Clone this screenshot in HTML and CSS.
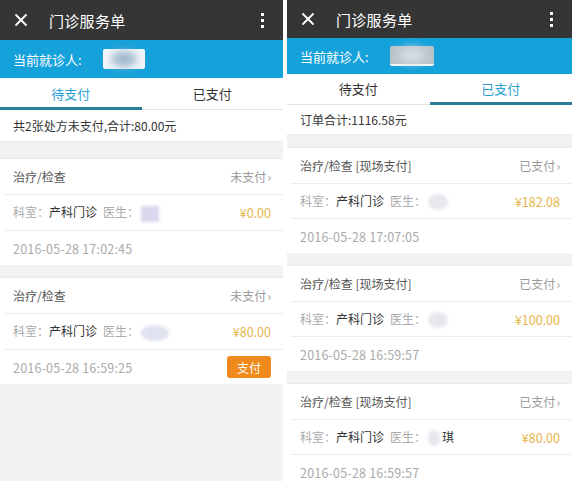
FILE: index.html
```html
<!DOCTYPE html>
<html lang="zh">
<head>
<meta charset="utf-8">
<link rel="stylesheet" href="styles.css">
</head>
<body>
<div class="screens">
  <section class="phone phone-left">
    <header class="titlebar">
      <svg class="close" width="14" height="14" viewBox="0 0 14 14"><path d="M1.5 1.5 L12.5 12.5 M12.5 1.5 L1.5 12.5" stroke="#fff" stroke-width="1.8" fill="none"/></svg>
      <span class="title">门诊服务单</span>
      <span class="more"><i></i><i></i><i></i></span>
    </header>
    <div class="patient">当前就诊人: <span class="name-blur"><b></b></span></div>
    <nav class="tabs">
      <div class="tab active">待支付</div>
      <div class="tab">已支付</div>
    </nav>
    <div class="summary">共2张处方未支付,合计:80.00元</div>
    <div class="list list-left">
      <div class="card">
        <div class="row"><span class="kind">治疗/检查</span><span class="status">未支付<em>›</em></span></div>
        <div class="row mid"><span><span class="lbl">科室：</span><span class="dept">产科门诊</span><span class="lbl doc">医生：</span><span class="doc-blur"></span></span><span class="amount">¥0.00</span></div>
        <div class="row"><span class="date">2016-05-28 17:02:45</span></div>
      </div>
      <div class="card">
        <div class="row"><span class="kind">治疗/检查</span><span class="status">未支付<em>›</em></span></div>
        <div class="row mid"><span><span class="lbl">科室：</span><span class="dept">产科门诊</span><span class="lbl doc">医生：</span><span class="doc-blur wide"></span></span><span class="amount">¥80.00</span></div>
        <div class="row"><span class="date">2016-05-28 16:59:25</span><span class="pay">支付</span></div>
      </div>
    </div>
  </section>
  <section class="phone phone-right">
    <header class="titlebar">
      <svg class="close" width="14" height="14" viewBox="0 0 14 14"><path d="M1.5 1.5 L12.5 12.5 M12.5 1.5 L1.5 12.5" stroke="#fff" stroke-width="1.8" fill="none"/></svg>
      <span class="title">门诊服务单</span>
      <span class="more"><i></i><i></i><i></i></span>
    </header>
    <div class="patient">当前就诊人: <span class="name-blur gray"><b></b></span></div>
    <nav class="tabs">
      <div class="tab">待支付</div>
      <div class="tab active">已支付</div>
    </nav>
    <div class="summary">订单合计:1116.58元</div>
    <div class="list list-right">
      <div class="card">
        <div class="row"><span class="kind">治疗/检查 [现场支付]</span><span class="status">已支付<em>›</em></span></div>
        <div class="row mid"><span><span class="lbl">科室：</span><span class="dept">产科门诊</span><span class="lbl doc">医生：</span><span class="doc-blur"></span></span><span class="amount">¥182.08</span></div>
        <div class="row"><span class="date">2016-05-28 17:07:05</span></div>
      </div>
      <div class="card">
        <div class="row"><span class="kind">治疗/检查 [现场支付]</span><span class="status">已支付<em>›</em></span></div>
        <div class="row mid"><span><span class="lbl">科室：</span><span class="dept">产科门诊</span><span class="lbl doc">医生：</span><span class="doc-blur"></span></span><span class="amount">¥100.00</span></div>
        <div class="row"><span class="date">2016-05-28 16:59:57</span></div>
      </div>
      <div class="card">
        <div class="row"><span class="kind">治疗/检查 [现场支付]</span><span class="status">已支付<em>›</em></span></div>
        <div class="row mid"><span><span class="lbl">科室：</span><span class="dept">产科门诊</span><span class="lbl doc">医生：</span><span class="doc-blur small"></span><span class="dept">琪</span></span><span class="amount">¥80.00</span></div>
        <div class="row"><span class="date">2016-05-28 16:59:57</span></div>
      </div>
    </div>
  </section>
</div>
</body>
</html>
```
FILE: styles.css
```css
* { box-sizing: border-box; margin: 0; padding: 0; }
html, body { width: 572px; height: 489px; overflow: hidden; background: #fff; }
body { font-family: "Noto Sans CJK SC", "Noto Sans", sans-serif; color: #333; }
.screens { display: flex; gap: 4px; height: 489px; align-items: flex-start; }
.phone { display: flex; flex-direction: column; background: #fff; overflow: hidden; }
.phone-left { width: 283px; height: 481px; background: #f2f2f2; }
.phone-right { width: 285px; height: 489px; background: #f2f2f2; }

.titlebar { height: 40px; background: #353535; color: #fff; display: flex; align-items: center; padding: 0 0 0 14px; }
.close { margin-right: 21px; flex: none; }
.title { font-size: 15px; flex: 1; letter-spacing: 0.3px; }
.more { width: 22px; margin-right: 10px; display: flex; flex-direction: column; align-items: center; gap: 3px; }
.more i { width: 3px; height: 3px; background: #fff; display: block; }

.patient { height: 38px; background: #15a1da; color: #fff; font-size: 13px; display: flex; align-items: center; padding-left: 13px; gap: 21px; }
.name-blur { width: 42px; height: 20px; background: #f4f7fb; display: flex; align-items: center; justify-content: center; border-radius: 2px; }
.name-blur b { width: 26px; height: 16px; background: #9fb6cc; border-radius: 50%; filter: blur(4px); }
.name-blur.gray { background: #b9c3cc; border-bottom: 2px solid #f4f7fb; width: 44px; }
.name-blur.gray b { background: #d6dde3; }

.tabs { height: 32px; display: flex; background: #fff; }
.tab { flex: 1; display: flex; align-items: center; justify-content: center; font-size: 13px; color: #333; border-bottom: 1px solid #e4e4e4; }
.tab.active { color: #2c9fd3; border-bottom: 3px solid #2a7d99; padding-top: 2px; }

.summary { height: 32px; background: #fff; font-size: 12px; color: #333; display: flex; align-items: center; padding-left: 13px; border-bottom: 1px solid #e8e8e8; }

.list { display: flex; flex-direction: column; }
.list-left { padding-top: 16px; gap: 12px; }
.list-right { padding-top: 12px; gap: 12px; }
.card { background: #fff; padding-left: 4px; border-top: 1px solid #e8e8e8; }
.row { height: 35px; display: flex; align-items: center; justify-content: space-between; padding: 0 12px 0 9px; font-size: 12px; }
.row + .row { border-top: 1px solid #ececec; }
.list-left .row.mid { height: 36px; }
.kind { color: #555; }
.status { color: #999; }
.status em { font-style: normal; margin-left: 1px; font-size: 12px; }
.lbl { color: #aaa; }
.dept { color: #333; }
.doc { margin-left: 6px; }
.doc-blur { display: inline-block; width: 18px; height: 16px; vertical-align: middle; background: #d9d8ee; filter: blur(1.5px); margin-left: 2px; margin-right: 2px; }
.doc-blur.wide { width: 28px; border-radius: 50%; background: #e0e3ef; }
.doc-blur.small { width: 10px; background: #e6e8f2; }
.list-right .doc-blur { background: #e7e8ee; border-radius: 50%; width: 20px; }
.list-right .doc-blur.small { width: 12px; }
.amount { color: #e5b54a; font-size: 12.5px; }
.date { color: #aaa; font-size: 12.5px; letter-spacing: 0.2px; }
.pay { width: 44px; height: 22px; background: #f08a1d; color: #fff; border-radius: 3px; font-size: 12px; display: flex; align-items: center; justify-content: center; }
```
